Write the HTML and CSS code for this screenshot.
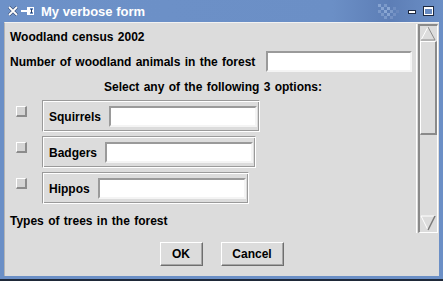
FILE: index.html
```html
<!DOCTYPE html>
<html lang="en">
<head>
    <meta charset="UTF-8">
    <meta name="viewport" content="width=device-width, initial-scale=1.0">
    <title>My verbose form</title>
    <link rel="stylesheet" href="styles.css">
</head>
<body>
    <div class="window">
        <div class="titlebar">
            <svg class="tb-close" width="10" height="10" viewBox="0 0 10 10">
                <path d="M1 1 L9 9 M9 1 L1 9" stroke="#2a3c60" stroke-width="3" />
                <path d="M1 1 L9 9 M9 1 L1 9" stroke="#fff" stroke-width="1.8" />
            </svg>
            <svg class="tb-pin" width="13" height="10" viewBox="0 0 13 10">
                <rect x="0" y="4" width="6" height="2" fill="#fff" />
                <rect x="6" y="1" width="2" height="8" fill="#fff" />
                <rect x="8.5" y="1.5" width="4" height="7" fill="none" stroke="#fff" />
                <rect x="8" y="4" width="5" height="2" fill="#fff" />
                <rect x="10" y="3" width="1" height="4" fill="#2a3c60" />
            </svg>
            <span class="title">My verbose form</span>
            <svg class="tb-grip" width="24" height="15" viewBox="0 0 24 15">
                <rect x="0" y="0" width="3" height="3" fill="#86a3d1" />
                <rect x="6" y="0" width="3" height="3" fill="#7b99c9" />
                <rect x="3" y="3" width="3" height="3" fill="#86a3d1" />
                <rect x="9" y="3" width="3" height="3" fill="#8aa7d4" />
                <rect x="15" y="3" width="3" height="3" fill="#6f8ec2" />
                <rect x="0" y="6" width="3" height="3" fill="#7b99c9" />
                <rect x="6" y="6" width="3" height="3" fill="#8aa7d4" />
                <rect x="12" y="6" width="3" height="3" fill="#7b99c9" />
                <rect x="18" y="6" width="3" height="3" fill="#6a88bd" />
                <rect x="3" y="9" width="3" height="3" fill="#7b99c9" />
                <rect x="9" y="9" width="3" height="3" fill="#86a3d1" />
                <rect x="15" y="9" width="3" height="3" fill="#7390c3" />
                <rect x="6" y="12" width="3" height="3" fill="#7b99c9" />
                <rect x="12" y="12" width="3" height="3" fill="#7390c3" />
            </svg>
            <svg class="tb-min" width="8" height="10" viewBox="0 0 8 10">
                <rect x="0.5" y="4.5" width="7" height="3" fill="#fff" stroke="#1c2840" />
            </svg>
            <svg class="tb-max" width="11" height="10" viewBox="0 0 11 10">
                <rect x="1" y="1" width="9" height="8" fill="none" stroke="#1c2840" stroke-width="2" />
                <rect x="1.5" y="1.5" width="8" height="7" fill="none" stroke="#fff" />
                <rect x="1" y="1" width="9" height="2" fill="#fff" />
            </svg>
        </div>

        <div class="frame">
            <div class="client">
                <div class="scroll-area">
                    <form class="form">
                        <div class="line">Woodland census 2002</div>

                        <div class="field-row">
                            <label>Number of woodland animals in the forest</label>
                            <input type="text" class="entry entry-wide">
                        </div>

                        <div class="line center">Select any of the following 3 options:</div>

                        <div class="option">
                            <span class="check"></span>
                            <div class="group">
                                <label>Squirrels</label>
                                <input type="text" class="entry">
                            </div>
                        </div>

                        <div class="option">
                            <span class="check"></span>
                            <div class="group">
                                <label>Badgers</label>
                                <input type="text" class="entry">
                            </div>
                        </div>

                        <div class="option">
                            <span class="check"></span>
                            <div class="group">
                                <label>Hippos</label>
                                <input type="text" class="entry">
                            </div>
                        </div>

                        <div class="line trees">Types of trees in the forest</div>
                    </form>

                    <div class="scrollbar">
                        <div class="trough">
                            <svg class="arrow" width="16" height="15" viewBox="0 0 16 15">
                                <path d="M1 14 L8 1" stroke="#fff" stroke-width="1" fill="none" />
                                <path d="M8 1 L15 14 L1 14" stroke="#8a8a8a" stroke-width="1" fill="none" />
                            </svg>
                            <div class="slider"></div>
                            <div class="fill"></div>
                            <svg class="arrow" width="16" height="16" viewBox="0 0 16 16">
                                <path d="M8 15 L1 1 L15 1" stroke="#fff" stroke-width="1" fill="none" />
                                <path d="M15 1 L8 15" stroke="#7a7a7a" stroke-width="1.5" fill="none" />
                            </svg>
                        </div>
                    </div>
                </div>

                <div class="buttons">
                    <button type="button" class="btn btn-ok">OK</button>
                    <button type="button" class="btn btn-cancel">Cancel</button>
                </div>
            </div>
        </div>
    </div>
</body>
</html>
```

FILE: styles.css
```css
body {
    margin: 0;
    font-family: "Liberation Sans", Arial, sans-serif;
    background: #6b8fc6;
}

.window {
    width: 443px;
    height: 281px;
    display: flex;
    flex-direction: column;
    background: #6b8fc6;
    box-sizing: border-box;
    border-bottom: 2px solid #1e2838;
}

.titlebar {
    height: 22px;
    display: flex;
    align-items: center;
    padding: 0 9px 0 8px;
    background: linear-gradient(to right, #6d91c8 0%, #6b8fc6 75%, #5d7eb6 88%, #6b8fc6 100%);
    color: #fff;
    flex-shrink: 0;
}

.tb-close {
    margin-right: 3px;
}

.tb-pin {
    margin-right: 7px;
}

.title {
    font-weight: bold;
    font-size: 13px;
    flex: 1;
}

.tb-grip {
    margin-right: 6px;
}

.tb-min {
    margin-right: 7px;
}

.frame {
    flex: 1;
    display: flex;
    padding: 0 4px 3px 4px;
    border-left: 1px solid #8fb0e2;
    margin-left: -1px;
}

.client {
    flex: 1;
    display: flex;
    flex-direction: column;
    background: #dcdcdc;
    border-top: 1px solid #f2f2f2;
    border-left: 1px solid #b4b4b4;
    padding-right: 1px;
}

.scroll-area {
    height: 210px;
    display: flex;
    overflow: hidden;
}

.form {
    flex: 1;
    padding: 5px 0 0 5px;
    font-size: 12px;
    font-weight: bold;
    word-spacing: 1px;
    color: #000;
}

.line {
    height: 18px;
    line-height: 18px;
    margin-bottom: 4px;
    white-space: nowrap;
}

.center {
    text-align: center;
}

.trees {
    margin-top: 8px;
}

.field-row {
    height: 23px;
    display: flex;
    align-items: center;
    gap: 11px;
    margin-bottom: 5px;
    white-space: nowrap;
}

.entry {
    box-sizing: border-box;
    width: 148px;
    height: 21px;
    padding: 0;
    margin: 0;
    background: #fff;
    border: 2px solid;
    border-color: #9a9a9a #f4f4f4 #f4f4f4 #9a9a9a;
    font: inherit;
    outline: none;
}

.entry-wide {
    width: 146px;
}

.option {
    display: flex;
    align-items: flex-start;
    height: 32px;
    margin-bottom: 4px;
}

.check {
    box-sizing: border-box;
    width: 11px;
    height: 11px;
    margin: 6px 15px 0 6px;
    background: #d4d4d4;
    border-style: solid;
    border-width: 1px 2px 2px 1px;
    border-color: #fff #8c8c8c #8c8c8c #fff;
}

.group {
    box-sizing: border-box;
    height: 32px;
    display: flex;
    align-items: center;
    gap: 8px;
    padding: 2px 2px 1px 6px;
    border: 1px solid;
    border-color: #9a9a9a #fff #fff #9a9a9a;
    box-shadow: inset 1px 1px 0 #fff, inset -1px -1px 0 #9a9a9a;
    white-space: nowrap;
}

.scrollbar {
    width: 20px;
    margin-top: 1px;
    height: 209px;
    border-left: 1px solid #fff;
    padding-left: 1px;
    box-sizing: content-box;
}

.trough {
    box-sizing: border-box;
    height: 209px;
    display: flex;
    flex-direction: column;
    border-style: solid;
    border-width: 2px 1px 1px 2px;
    border-color: #8a8a8a #fff #fff #8a8a8a;
    padding-bottom: 1px;
}

.arrow {
    display: block;
    flex-shrink: 0;
}

.slider {
    box-sizing: border-box;
    height: 94px;
    flex-shrink: 0;
    border-style: solid;
    border-width: 1px 2px 2px 1px;
    border-color: #fff #8a8a8a #8a8a8a #fff;
}

.fill {
    flex: 1;
}

.buttons {
    flex: 1;
    display: flex;
    justify-content: center;
    align-items: flex-start;
    gap: 18px;
    padding-top: 9px;
}

.btn {
    box-sizing: border-box;
    height: 24px;
    padding: 0;
    background: #dcdcdc;
    font-family: "Liberation Sans", Arial, sans-serif;
    font-size: 12px;
    font-weight: bold;
    color: #000;
    border: 1px solid;
    border-color: #fff #6e6e6e #6e6e6e #fff;
    box-shadow: inset -1px -1px 0 #a6a6a6;
}

.btn-ok {
    width: 43px;
}

.btn-cancel {
    width: 63px;
}
```
